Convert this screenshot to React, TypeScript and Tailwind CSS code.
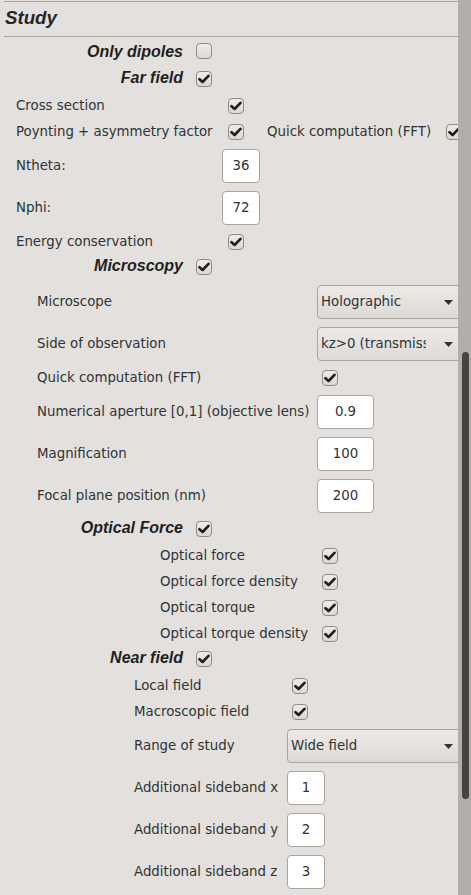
import React from "react";

const Check = ({ checked = true }: { checked?: boolean }) => (
  <span className="inline-flex h-4 w-4 shrink-0 items-center justify-center rounded-[4px] border border-[#8e8a86] bg-linear-to-b from-[#efedeb] to-[#dbd8d4]">
    {checked && (
      <svg width="12" height="10" viewBox="0 0 12 10">
        <path d="M1.5 5.2 L4.6 8 L10.5 1.8" fill="none" stroke="#1e1e1e" strokeWidth="2.6" strokeLinecap="round" strokeLinejoin="round" />
      </svg>
    )}
  </span>
);

const Field = ({ value, w }: { value: string; w: string }) => (
  <span className={`flex h-[34px] shrink-0 items-center justify-center rounded-[4px] border border-[#a8a4a0] bg-white text-[#2e3436] ${w}`}>
    {value}
  </span>
);

const Select = ({ value, w }: { value: string; w: string }) => (
  <span className={`flex h-[34px] shrink-0 items-center rounded-[4px] border border-[#a8a4a0] bg-linear-to-b from-[#eceae7] to-[#dedad6] pl-[3px] pr-[10px] ${w}`}>
    <span className="w-[105px] overflow-hidden whitespace-nowrap">{value}</span>
    <svg className="ml-auto" width="9" height="5" viewBox="0 0 9 5">
      <path d="M0 0 H9 L4.5 5 Z" fill="#2e3436" />
    </svg>
  </span>
);

const Heading = ({ text, checked = true }: { text: string; checked?: boolean }) => (
  <div className="flex h-[26px] items-center">
    <span className="w-[184px] shrink-0 pb-[4px] pr-[1px] text-right font-['Liberation_Sans',Arial,sans-serif] text-[16px] font-bold italic text-[#1f1f1f]">
      {text}
    </span>
    <span className="ml-[12px]">
      <Check checked={checked} />
    </span>
  </div>
);

export default function App() {
  return (
    <div className="flex h-[895px] w-[471px] overflow-hidden bg-[#e3e0dd] font-['DejaVu_Sans',sans-serif] text-[13.33px] text-[#2e3436]">
      <div className="w-[458px] shrink-0 overflow-hidden">
        <div className="pt-px">
          <div className="ml-[4px] border-y border-[#a8a4a0]">
            <div className="flex h-[34px] items-center pl-px pb-[2px] font-['Liberation_Sans',Arial,sans-serif] text-[18.7px] font-bold italic text-[#262626]">
              Study
            </div>
          </div>
        </div>

        <div className="pt-[4px]">
          <Heading text="Only dipoles" checked={false} />
          <Heading text="Far field" />

          <div className="flex h-[26px] items-center pl-[16px]">
            <span className="w-[212px] shrink-0">Cross section</span>
            <Check />
          </div>
          <div className="flex h-[26px] items-center pl-[16px] whitespace-nowrap">
            <span className="w-[212px] shrink-0">Poynting + asymmetry factor</span>
            <Check />
            <span className="ml-[23px] w-[179px] shrink-0">Quick computation (FFT)</span>
            <Check />
          </div>
          <div className="flex h-[42px] items-center pl-[16px]">
            <span className="w-[206px] shrink-0">Ntheta:</span>
            <Field value="36" w="w-[38px]" />
          </div>
          <div className="flex h-[42px] items-center pl-[16px]">
            <span className="w-[206px] shrink-0">Nphi:</span>
            <Field value="72" w="w-[38px]" />
          </div>
          <div className="flex h-[26px] items-center pl-[16px]">
            <span className="w-[212px] shrink-0">Energy conservation</span>
            <Check />
          </div>

          <Heading text="Microscopy" />
          <div className="flex h-[42px] items-center pl-[37px]">
            <span className="w-[280px] shrink-0">Microscope</span>
            <Select value="Holographic" w="w-[147px]" />
          </div>
          <div className="flex h-[42px] items-center pl-[37px]">
            <span className="w-[280px] shrink-0">Side of observation</span>
            <Select value="kz>0 (transmission)" w="w-[147px]" />
          </div>
          <div className="flex h-[26px] items-center pl-[37px]">
            <span className="w-[285px] shrink-0">Quick computation (FFT)</span>
            <Check />
          </div>
          <div className="flex h-[42px] items-center pl-[37px] whitespace-nowrap">
            <span className="w-[280px] shrink-0">Numerical aperture [0,1] (objective lens)</span>
            <Field value="0.9" w="w-[57px]" />
          </div>
          <div className="flex h-[42px] items-center pl-[37px]">
            <span className="w-[280px] shrink-0">Magnification</span>
            <Field value="100" w="w-[57px]" />
          </div>
          <div className="flex h-[42px] items-center pl-[37px]">
            <span className="w-[280px] shrink-0">Focal plane position (nm)</span>
            <Field value="200" w="w-[57px]" />
          </div>

          <Heading text="Optical Force" />
          {["Optical force", "Optical force density", "Optical torque", "Optical torque density"].map((t) => (
            <div key={t} className="flex h-[26px] items-center pl-[160px]">
              <span className="w-[162px] shrink-0">{t}</span>
              <Check />
            </div>
          ))}

          <Heading text="Near field" />
          <div className="flex h-[26px] items-center pl-[134px]">
            <span className="w-[158px] shrink-0">Local field</span>
            <Check />
          </div>
          <div className="flex h-[26px] items-center pl-[134px]">
            <span className="w-[158px] shrink-0">Macroscopic field</span>
            <Check />
          </div>
          <div className="flex h-[42px] items-center pl-[134px]">
            <span className="w-[153px] shrink-0">Range of study</span>
            <Select value="Wide field" w="w-[177px]" />
          </div>
          {[
            ["Additional sideband x", "1"],
            ["Additional sideband y", "2"],
            ["Additional sideband z", "3"],
          ].map(([t, v]) => (
            <div key={t} className="flex h-[42px] items-center pl-[134px] whitespace-nowrap">
              <span className="w-[153px] shrink-0">{t}</span>
              <Field value={v} w="w-[38px]" />
            </div>
          ))}
        </div>
      </div>

      <div className="w-[13px] shrink-0 bg-[#b3aeab] pt-[352px] pl-[4px]">
        <div className="h-[447px] w-[7px] rounded-full bg-[#48433f]" />
      </div>
    </div>
  );
}
